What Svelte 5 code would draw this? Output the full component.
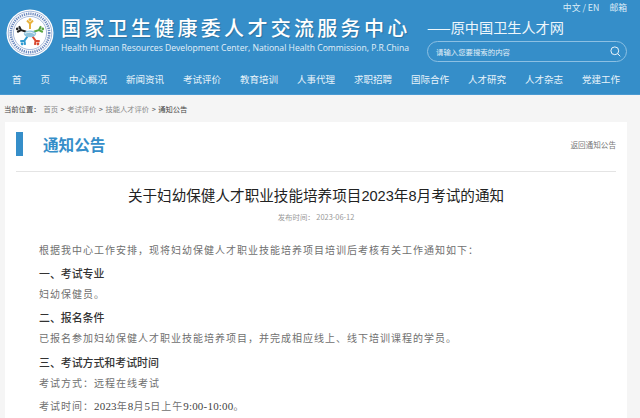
<script>
    const navItems = ['中心概况', '新闻资讯', '考试评价', '教育培训', '人事代理', '求职招聘', '国际合作', '人才研究', '人才杂志', '党建工作'];
    const crumbs = ['首页', '考试评价', '技能人才评价', '通知公告'];
    // star arms of the logo: rotation and colour
    const arms = [
        { r: 0, c: '#e8b23c' },
        { r: 72, c: '#5aa640' },
        { r: 144, c: '#d9482f' },
        { r: 216, c: '#2f9ad0' },
        { r: 288, c: '#222' }
    ];
</script>

<div class="page">
    <header>
        <div class="head-top">
            <svg class="logo" width="48" height="48" viewBox="0 0 48 48">
                <circle cx="24" cy="24" r="23.5" fill="#fff" />
                <circle cx="24" cy="24" r="21.8" fill="none" stroke="#7f9ccb" stroke-width="0.7" />
                <circle cx="24" cy="24" r="16.6" fill="none" stroke="#7f9ccb" stroke-width="0.7" />
                <circle cx="24" cy="24" r="19.2" fill="none" stroke="#6f8cc0" stroke-width="2.6" stroke-dasharray="1.3 0.9" />
                {#each arms as a}
                    <g transform="rotate({a.r} 24 24)">
                        <path d="M24 20 L24 14 M24 14.5 L21 11.5 M24 14.5 L27 11.5" stroke={a.c} stroke-width="2" fill="none" />
                        <circle cx="24" cy="10.6" r="1.4" fill={a.c} />
                    </g>
                {/each}
                <ellipse cx="24" cy="24.8" rx="6.2" ry="3.4" fill="#8fc3dd" />
                <path d="M18.8 24.4 Q24 21.6 29.2 25.2" stroke="#fff" stroke-width="0.8" fill="none" />
            </svg>
            <div class="brand">
                <div class="brand-cn">国家卫生健康委人才交流服务中心</div>
                <div class="brand-en">Health Human Resources Development Center, National Health Commission, P.R.China</div>
            </div>
            <div class="side">
                <div class="langs"><span>中文 / EN</span><span>邮箱</span></div>
                <div class="former">——原中国卫生人才网</div>
                <div class="search">
                    <span>请输入您要搜索的内容</span>
                    <svg width="11" height="11" viewBox="0 0 11 11">
                        <circle cx="4.8" cy="4.8" r="3.9" fill="none" stroke="#fff" stroke-width="0.9" />
                        <path d="M7.7 7.7 L10.3 10.3" stroke="#fff" stroke-width="0.9" />
                    </svg>
                </div>
            </div>
        </div>
        <nav>
            <span class="home">首<i></i>页</span>
            {#each navItems as item}
                <span>{item}</span>
            {/each}
        </nav>
    </header>

    <div class="crumbs">
        <b>当前位置：</b>
        {#each crumbs as c, i}
            <span class:last={i === crumbs.length - 1}>{c}</span>
            {#if i < crumbs.length - 1}<em>&gt;</em>{/if}
        {/each}
    </div>

    <main>
        <div class="card-head">
            <div class="bar"></div>
            <h2>通知公告</h2>
            <a href="#back">返回通知公告</a>
        </div>
        <h1>关于妇幼保健人才职业技能培养项目2023年8月考试的通知</h1>
        <div class="date">发布时间： 2023-06-12</div>
        <div class="article">
            <p>根据我中心工作安排，现将妇幼保健人才职业技能培养项目培训后考核有关工作通知如下：</p>
            <h3>一、考试专业</h3>
            <p>妇幼保健员。</p>
            <h3>二、报名条件</h3>
            <p>已报名参加妇幼保健人才职业技能培养项目，并完成相应线上、线下培训课程的学员。</p>
            <h3>三、考试方式和考试时间</h3>
            <p>考试方式：远程在线考试</p>
            <p>考试时间：<span class="num">2023</span>年<span class="num">8</span>月<span class="num">5</span>日上午<span class="num">9:00-10:00</span>。</p>
        </div>
    </main>
</div>

<style>
    :global(body) {
        margin: 0;
        background: #f5f5f5;
    }
    .page {
        width: 640px;
        height: 418px;
        overflow: hidden;
        font-family: "Noto Sans CJK SC", "Liberation Sans", sans-serif;
    }
    header {
        background: #358ec9;
        height: 94px;
        border-bottom: 1px solid #4a9ad2;
        color: #fff;
    }
    .head-top {
        display: flex;
        height: 63px;
    }
    .logo {
        margin: 9px 7px 0 6px;
        flex: none;
    }
    .brand {
        width: 256px;
        flex: none;
        white-space: nowrap;
        padding-top: 14px;
    }
    .brand-cn {
        font-size: 20px;
        line-height: 28px;
        letter-spacing: 3.3px;
        font-weight: 500;
        text-shadow: 1px 1px 1px rgba(0, 0, 0, 0.2);
    }
    .brand-en {
        font-family: "Open Sans", sans-serif;
        font-size: 8.6px;
        line-height: 12px;
        margin-top: 0;
        color: #e4f0f8;
    }
    .side {
        margin-left: 110px;
        width: 200px;
    }
    .langs {
        display: flex;
        justify-content: flex-end;
        gap: 10px;
        font-size: 8.8px;
        line-height: 12px;
        padding-top: 2px;
        color: #dcecf7;
    }
    .former {
        font-size: 14.2px;
        line-height: 20px;
        margin-top: 3px;
        white-space: nowrap;
        letter-spacing: -0.05px;
        color: #eef6fb;
    }
    .search {
        box-sizing: border-box;
        display: flex;
        justify-content: space-between;
        align-items: center;
        width: 200px;
        height: 21px;
        margin-top: 4px;
        padding: 0 5px 0 8px;
        border: 1px solid #8cc0e3;
        border-radius: 11px;
        font-size: 7.4px;
        color: #e4f0f8;
    }
    nav {
        display: flex;
        gap: 19px;
        padding: 8px 0 0 12px;
        font-size: 9.5px;
        line-height: 16px;
        color: #e8f3fa;
        white-space: nowrap;
    }
    nav span {
        width: 38px;
        flex: none;
    }
    .home {
        display: flex;
        justify-content: space-between;
    }
    .crumbs {
        display: flex;
        align-items: center;
        height: 27px;
        padding-left: 4px;
        font-size: 7.3px;
        color: #888;
        white-space: nowrap;
    }
    .crumbs b {
        font-weight: 400;
        color: #444;
        margin-right: 3px;
    }
    .crumbs em {
        font-style: normal;
        color: #555;
        margin: 0 2.5px;
    }
    .crumbs .last {
        color: #444;
    }
    main {
        margin-left: 5px;
        width: 622px;
        height: 300px;
        background: #fff;
        padding: 0 11px;
        box-sizing: border-box;
    }
    .card-head {
        display: flex;
        align-items: center;
        height: 50px;
        padding-bottom: 5px;
        box-sizing: border-box;
        border-bottom: 1px solid #e4e4e4;
    }
    .bar {
        width: 7px;
        height: 24px;
        background: #358ec9;
        margin-right: 20px;
    }
    h2 {
        margin: 0;
        font-size: 15.6px;
        font-weight: 700;
        color: #358ec9;
    }
    .card-head a {
        margin-left: auto;
        font-size: 7.6px;
        color: #777;
        text-decoration: none;
        padding-bottom: 0;
    }
    h1 {
        margin: 13px 0 0;
        font-family: "Liberation Sans", "Noto Sans CJK SC", sans-serif;
        font-size: 14.6px;
        line-height: 22px;
        font-weight: 400;
        text-align: center;
        color: #222;
    }
    .date {
        text-align: center;
        font-size: 7.4px;
        line-height: 12px;
        margin-top: 4px;
        color: #999;
    }
    .article {
        margin-top: 16.5px;
        padding-left: 23px;
    }
    .article p {
        margin: 0;
        font-family: "Liberation Serif", "Noto Sans CJK SC", serif;
        font-size: 10px;
        line-height: 22.2px;
        letter-spacing: 1px;
        color: #707070;
        white-space: nowrap;
    }
    .article h3 {
        margin: 0;
        font-size: 10.9px;
        line-height: 22.2px;
        font-weight: 500;
        color: #333;
    }
    .num {
        color: #444;
        font-size: 11px;
        letter-spacing: 0.2px;
    }
</style>
